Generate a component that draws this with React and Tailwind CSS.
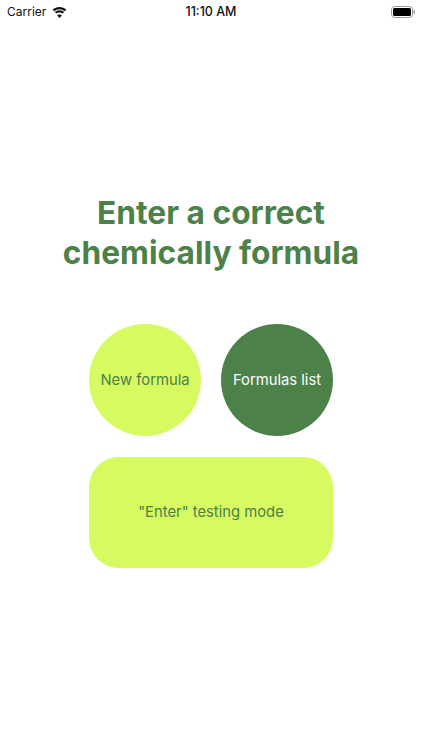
const WifiIcon = () => (
  <svg width="15" height="11" viewBox="0 0 15 11" fill="#111">
    <path d="M7.500 2.200c2 0 3.900.8 5.300 2.100l1.500-1.600C12.500 1 10.100 0 7.500 0S2.500 1 .7 2.700l1.500 1.600C3.600 3 5.500 2.200 7.500 2.200z" />
    <path d="M7.500 5.400c1.200 0 2.300.5 3.100 1.200l1.500-1.600C10.900 3.900 9.300 3.200 7.500 3.200S4.100 3.900 2.900 5l1.500 1.600c.8-.7 1.900-1.200 3.100-1.200z" />
    <path d="M7.500 11l2.400-2.600C9.300 7.800 8.400 7.400 7.500 7.400s-1.800.4-2.400 1z" />
  </svg>
);

const BatteryIcon = () => (
  <svg width="24" height="12" viewBox="0 0 24 12">
    <rect x="0.5" y="0.5" width="21" height="11" rx="3" fill="none" stroke="#999" />
    <rect x="2" y="2" width="18" height="8" rx="1.500" fill="#000" />
    <rect x="22.500" y="4" width="1.300" height="4" rx="0.600" fill="#999" />
  </svg>
);

const App = () => {
  return (
    <div className="w-[422px] h-[750px] bg-white flex flex-col font-['Inter',sans-serif] overflow-hidden">
      <div className="h-[22px] mt-[1px] pl-[7px] pr-[7px] flex items-center justify-between text-[12px] text-[#111]">
        <div className="w-[150px] flex items-center gap-[6px]">
          <span>Carrier</span>
          <WifiIcon />
        </div>
        <span className="font-medium text-[12.5px]">11:10 AM</span>
        <div className="w-[150px] flex justify-end">
          <BatteryIcon />
        </div>
      </div>

      <h1 className="mt-[170px] text-center text-[31.700px] leading-[40px] font-bold text-[#4c8149]">
        Enter a correct
        <br />
        chemically formula
      </h1>

      <div className="mt-[51px] mx-auto w-[244px] grid grid-cols-2 gap-x-[20px] gap-y-[21px]">
        <button className="w-[112px] h-[112px] rounded-full bg-[#d7fa60] text-[#4c8149] text-[14.800px]">
          New formula
        </button>
        <button className="w-[112px] h-[112px] rounded-full bg-[#4c8149] text-white text-[14.800px] justify-self-end">
          Formulas list
        </button>
        <button className="col-span-2 h-[111px] rounded-[30px] bg-[#d7fa60] text-[#4c8149] text-[14.800px]">
          "Enter" testing mode
        </button>
      </div>
    </div>
  );
};

export default App;
